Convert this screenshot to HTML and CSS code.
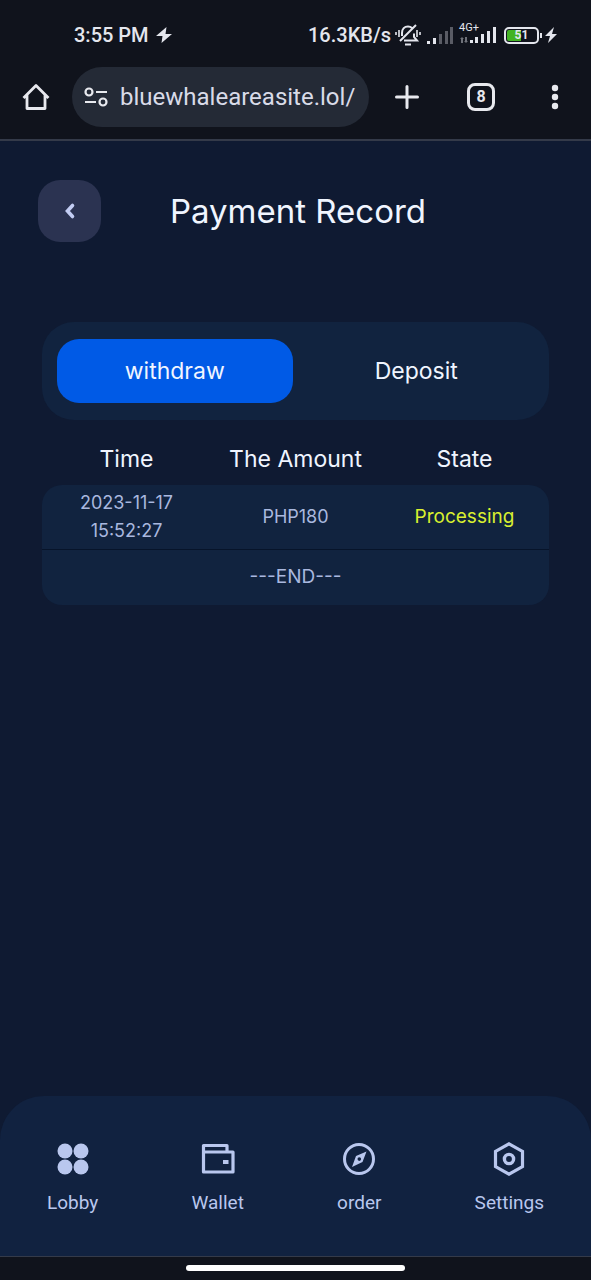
FILE: index.html
```
<!DOCTYPE html>
<html lang="en">
<head>
<meta charset="utf-8">
<meta name="viewport" content="width=device-width, initial-scale=1">
<title>Payment Record</title>
<link rel="stylesheet" href="styles.css">
</head>
<body>
<div class="status-bar">
  <div class="status-group">
    <span>3:55 PM</span>
    <svg class="saver" width="18" height="16" viewBox="0 0 18 16" fill="currentColor" aria-hidden="true"><path d="M11.500 0 1 9h6.500L6.500 16 17 7h-6.500z"/></svg>
  </div>
  <div class="status-group">
    <span>16.3KB/s</span>
    <svg class="bell" width="26" height="22" viewBox="0 0 26 22" fill="none" stroke="currentColor" stroke-width="2" aria-hidden="true"><path d="M9 16.500h13l-3-3.500V9.500M7 12V9c0-4 2.500-6.500 6-6.500 1.500 0 3 .5 4 1.500M21 1 5 17"/><path d="M10 20.500h6"/><path d="M4 6v7M1 8v3M22 6v7M25 8v3" stroke-width="1.600"/></svg>
    <svg class="signal" width="27" height="17" viewBox="0 0 27 17" fill="currentColor" aria-hidden="true"><path d="M0 14h3v3H0zM6 11h3v6H6z"/><path d="M12 7h3v10h-3zM18 4h3v13h-3zM23 0h3v17h-3z" opacity=".35"/></svg>
    <span class="mobile">
      <span class="network">4G+</span>
      <svg width="38" height="20" viewBox="0 0 38 20" fill="currentColor" aria-hidden="true"><path d="m3 12 2 2H4v4H2v-4H1zM7 18l-2-2h1v-4h2v4h1z" opacity=".45"/><path d="M11 15h3v3h-3zM16 12h3v6h-3zM22 9h3v9h-3zM28 6h3v12h-3zM34 2h3v16h-3z"/></svg>
    </span>
    <span class="battery"><span class="battery-body">51</span><span class="battery-tip"></span></span>
    <svg class="charge" width="12" height="16" viewBox="0 0 12 16" fill="currentColor" aria-hidden="true"><path d="M9 0 0 9h5l-2 7 9-9H7z"/></svg>
  </div>
</div>

<header class="browser-bar">
  <button class="icon-button" aria-label="Home"><svg width="28" height="28" viewBox="0 0 28 28" fill="none" stroke="currentColor" stroke-width="2.800" stroke-linejoin="round" aria-hidden="true"><path d="M1.500 15 14 2.500 26.500 15M5 12v13.500h18V12"/></svg></button>
  <div class="address">
    <svg width="24" height="20" viewBox="0 0 24 20" fill="none" stroke="currentColor" stroke-width="2.200" aria-hidden="true"><circle cx="5" cy="5" r="3.500"/><path d="M12 5h11M1 15h11"/><circle cx="19" cy="15" r="3.500"/></svg>
    <input class="url" type="text" value="bluewhaleareasite.lol/" aria-label="Address">
  </div>
  <div class="browser-actions">
    <button class="icon-button" aria-label="New tab"><svg width="28" height="28" viewBox="0 0 28 28" stroke="currentColor" stroke-width="3" stroke-linecap="round" aria-hidden="true"><path d="M14 3.500v21M3.500 14h21"/></svg></button>
    <button class="icon-button" aria-label="Open tabs"><span class="tab-count">8</span></button>
    <button class="icon-button" aria-label="Menu"><svg width="28" height="28" viewBox="0 0 28 28" fill="currentColor" aria-hidden="true"><circle cx="14" cy="5" r="3.200"/><circle cx="14" cy="14" r="3.200"/><circle cx="14" cy="23" r="3.200"/></svg></button>
  </div>
</header>

<main class="page">
  <div class="page-header">
    <button class="back" aria-label="Back"><svg width="12" height="18" viewBox="0 0 12 18" fill="none" stroke="currentColor" stroke-width="3.600" stroke-linecap="round" aria-hidden="true"><path d="M8.500 3.500 3.500 9l5 5.500"/></svg></button>
    <h1 class="title">Payment Record</h1>
  </div>

  <div class="tabs" role="tablist">
    <button class="tab tab-active" role="tab" aria-selected="true">withdraw</button>
    <button class="tab" role="tab" aria-selected="false">Deposit</button>
  </div>

  <table class="records">
    <thead><tr><th>Time</th><th>The Amount</th><th>State</th></tr></thead>
    <tbody>
      <tr><td>2023-11-17<br>15:52:27</td><td>PHP180</td><td class="processing">Processing</td></tr>
      <tr><td class="end" colspan="3">---END---</td></tr>
    </tbody>
  </table>
</main>

<nav class="nav" aria-label="Main">
  <a class="nav-item" href="#lobby"><svg width="34" height="34" viewBox="0 0 34 34" fill="currentColor" aria-hidden="true"><circle cx="9" cy="9" r="7.500"/><circle cx="25" cy="9" r="7.500"/><circle cx="9" cy="25" r="7.500"/><circle cx="25" cy="25" r="7.500"/></svg>Lobby</a>
  <a class="nav-item" href="#wallet"><svg width="34" height="34" viewBox="0 0 34 34" fill="none" stroke="currentColor" stroke-width="3.200" stroke-linejoin="round" aria-hidden="true"><path d="M2.500 10V3.500H26V10M2.500 10h29.500v20H2.500z"/><path d="M22 20h5.500" stroke-width="4"/></svg>Wallet</a>
  <a class="nav-item" href="#order"><svg width="34" height="34" viewBox="0 0 34 34" fill="none" stroke="currentColor" stroke-width="3" aria-hidden="true"><circle cx="17" cy="17" r="14.500"/><path fill="currentColor" fill-rule="evenodd" stroke="none" d="M24.500 9.500 20.500 20 10 25l4-11zM17.300 15.300a1.800 1.800 0 1 0 0 3.600 1.800 1.800 0 0 0 0-3.600z"/></svg>order</a>
  <a class="nav-item" href="#settings"><svg width="34" height="34" viewBox="0 0 34 34" fill="none" stroke="currentColor" stroke-width="3.200" aria-hidden="true"><path d="M17 1.800 30.500 9.400v15.200L17 32.200 3.500 24.600V9.400z"/><circle cx="17" cy="17" r="4.600" stroke-width="3.400"/></svg>Settings</a>
</nav>
<footer class="gesture-bar"><span class="gesture-handle"></span></footer>
</body>
</html>
```
FILE: styles.css
```
* { box-sizing: border-box; }

body {
  margin: 0;
  min-height: 100vh;
  display: flex;
  flex-direction: column;
  background: #0f1a32;
  color: #f0f5ff;
  font-family: Inter, sans-serif;
}

button {
  padding: 0;
  border: 0;
  background: none;
  color: inherit;
  font: inherit;
}

svg { display: block; flex: none; }

.status-bar {
  display: flex;
  justify-content: space-between;
  align-items: center;
  padding: 23px 34px 20px 74px;
  background: #10131c;
  color: #e4e6ed;
  font: 500 20px/24px Roboto, sans-serif;
}

.status-group { display: flex; align-items: center; }
.saver { margin-left: 6px; }
.bell { margin-left: 4px; }
.signal { margin-left: 6px; }

.mobile { position: relative; margin: 0 7px 0 5px; }
.network {
  position: absolute;
  top: -3px;
  left: 0;
  font-size: 11px;
  font-weight: 400;
  line-height: 12px;
}

.battery { display: flex; align-items: center; gap: 1px; }
.battery-body {
  width: 35px;
  border: 2px solid #e4e6ed;
  border-radius: 5px;
  background: linear-gradient(to right, #43b324 50%, #10131c 50%) content-box;
  padding: 1px;
  font-size: 12px;
  font-weight: 700;
  line-height: 11px;
  text-align: center;
}
.battery-tip { width: 2px; height: 5px; background: #e4e6ed; }
.charge { margin-left: 3px; }

.browser-bar {
  display: flex;
  align-items: center;
  padding: 0 22px 12px;
  border-bottom: 2px solid #343a49;
  background: #10131c;
  color: #e8e9ee;
}

.icon-button { width: 28px; height: 28px; flex: none; }

.address {
  flex: 1;
  min-width: 0;
  display: flex;
  align-items: center;
  gap: 12px;
  margin: 0 24px 0 22px;
  padding: 14px 8px 14px 12px;
  border-radius: 30px;
  background: #242a36;
}

.url {
  flex: 1;
  min-width: 0;
  height: 32px;
  padding: 0;
  border: 0;
  outline: 0;
  background: none;
  color: #d9dbe8;
  font: 24px/32px Roboto, sans-serif;
}

.browser-actions { display: flex; gap: 46px; }

.tab-count {
  display: block;
  border: 3px solid;
  border-radius: 8px;
  font: 700 16px/22px Roboto, sans-serif;
}

.page { flex: 1; padding: 39px 42px; }

.page-header {
  display: grid;
  grid-template-columns: 63px 1fr 63px;
  align-items: center;
  margin: 0 -9px 80px -4px;
}

.back {
  display: grid;
  place-items: center;
  height: 62px;
  border-radius: 22px;
  background: #2b3351;
  color: #c3cdf3;
}

.title {
  margin: 0;
  font-size: 33px;
  font-weight: 400;
  line-height: 40px;
  text-align: center;
  white-space: nowrap;
}

.tabs {
  display: flex;
  gap: 6px;
  padding: 17px 15px;
  border-radius: 32px;
  background: #11233f;
}

.tab {
  flex: 1;
  height: 64px;
  border-radius: 22px;
  font-size: 23px;
}
.tab-active { background: #005ae6; }

.records {
  width: 100%;
  table-layout: fixed;
  border-spacing: 0;
  text-align: center;
}

.records th {
  padding: 23px 0 10px;
  font-size: 23px;
  font-weight: 400;
  line-height: 32px;
}

.records td {
  padding: 4px 0;
  background: #11233f;
  color: #a9b8df;
  font-size: 18px;
  line-height: 28px;
}

.records tbody tr:first-child td { border-bottom: 1px solid #07142a; }
.records tbody tr:first-child td:first-child { border-top-left-radius: 20px; }
.records tbody tr:first-child td:last-child { border-top-right-radius: 20px; }
.records .processing { color: #d9f02f; font-size: 19px; }
.records .end { padding: 13px 0 14px; border-radius: 0 0 20px 20px; font-size: 19px; }

.nav {
  display: flex;
  justify-content: space-between;
  padding: 46px 47px 41px;
  border-radius: 44px 44px 0 0;
  background: #112240;
}

.nav-item {
  display: flex;
  flex-direction: column;
  align-items: center;
  gap: 15px;
  color: #b9c7ee;
  font: 19px/24px Roboto, sans-serif;
  text-decoration: none;
}

.gesture-bar {
  display: flex;
  justify-content: center;
  padding: 8px 0 9px;
  border-top: 1px solid #343a49;
  background: #10131c;
}

.gesture-handle {
  width: 37%;
  height: 6px;
  border-radius: 3px;
  background: #fff;
}
```
